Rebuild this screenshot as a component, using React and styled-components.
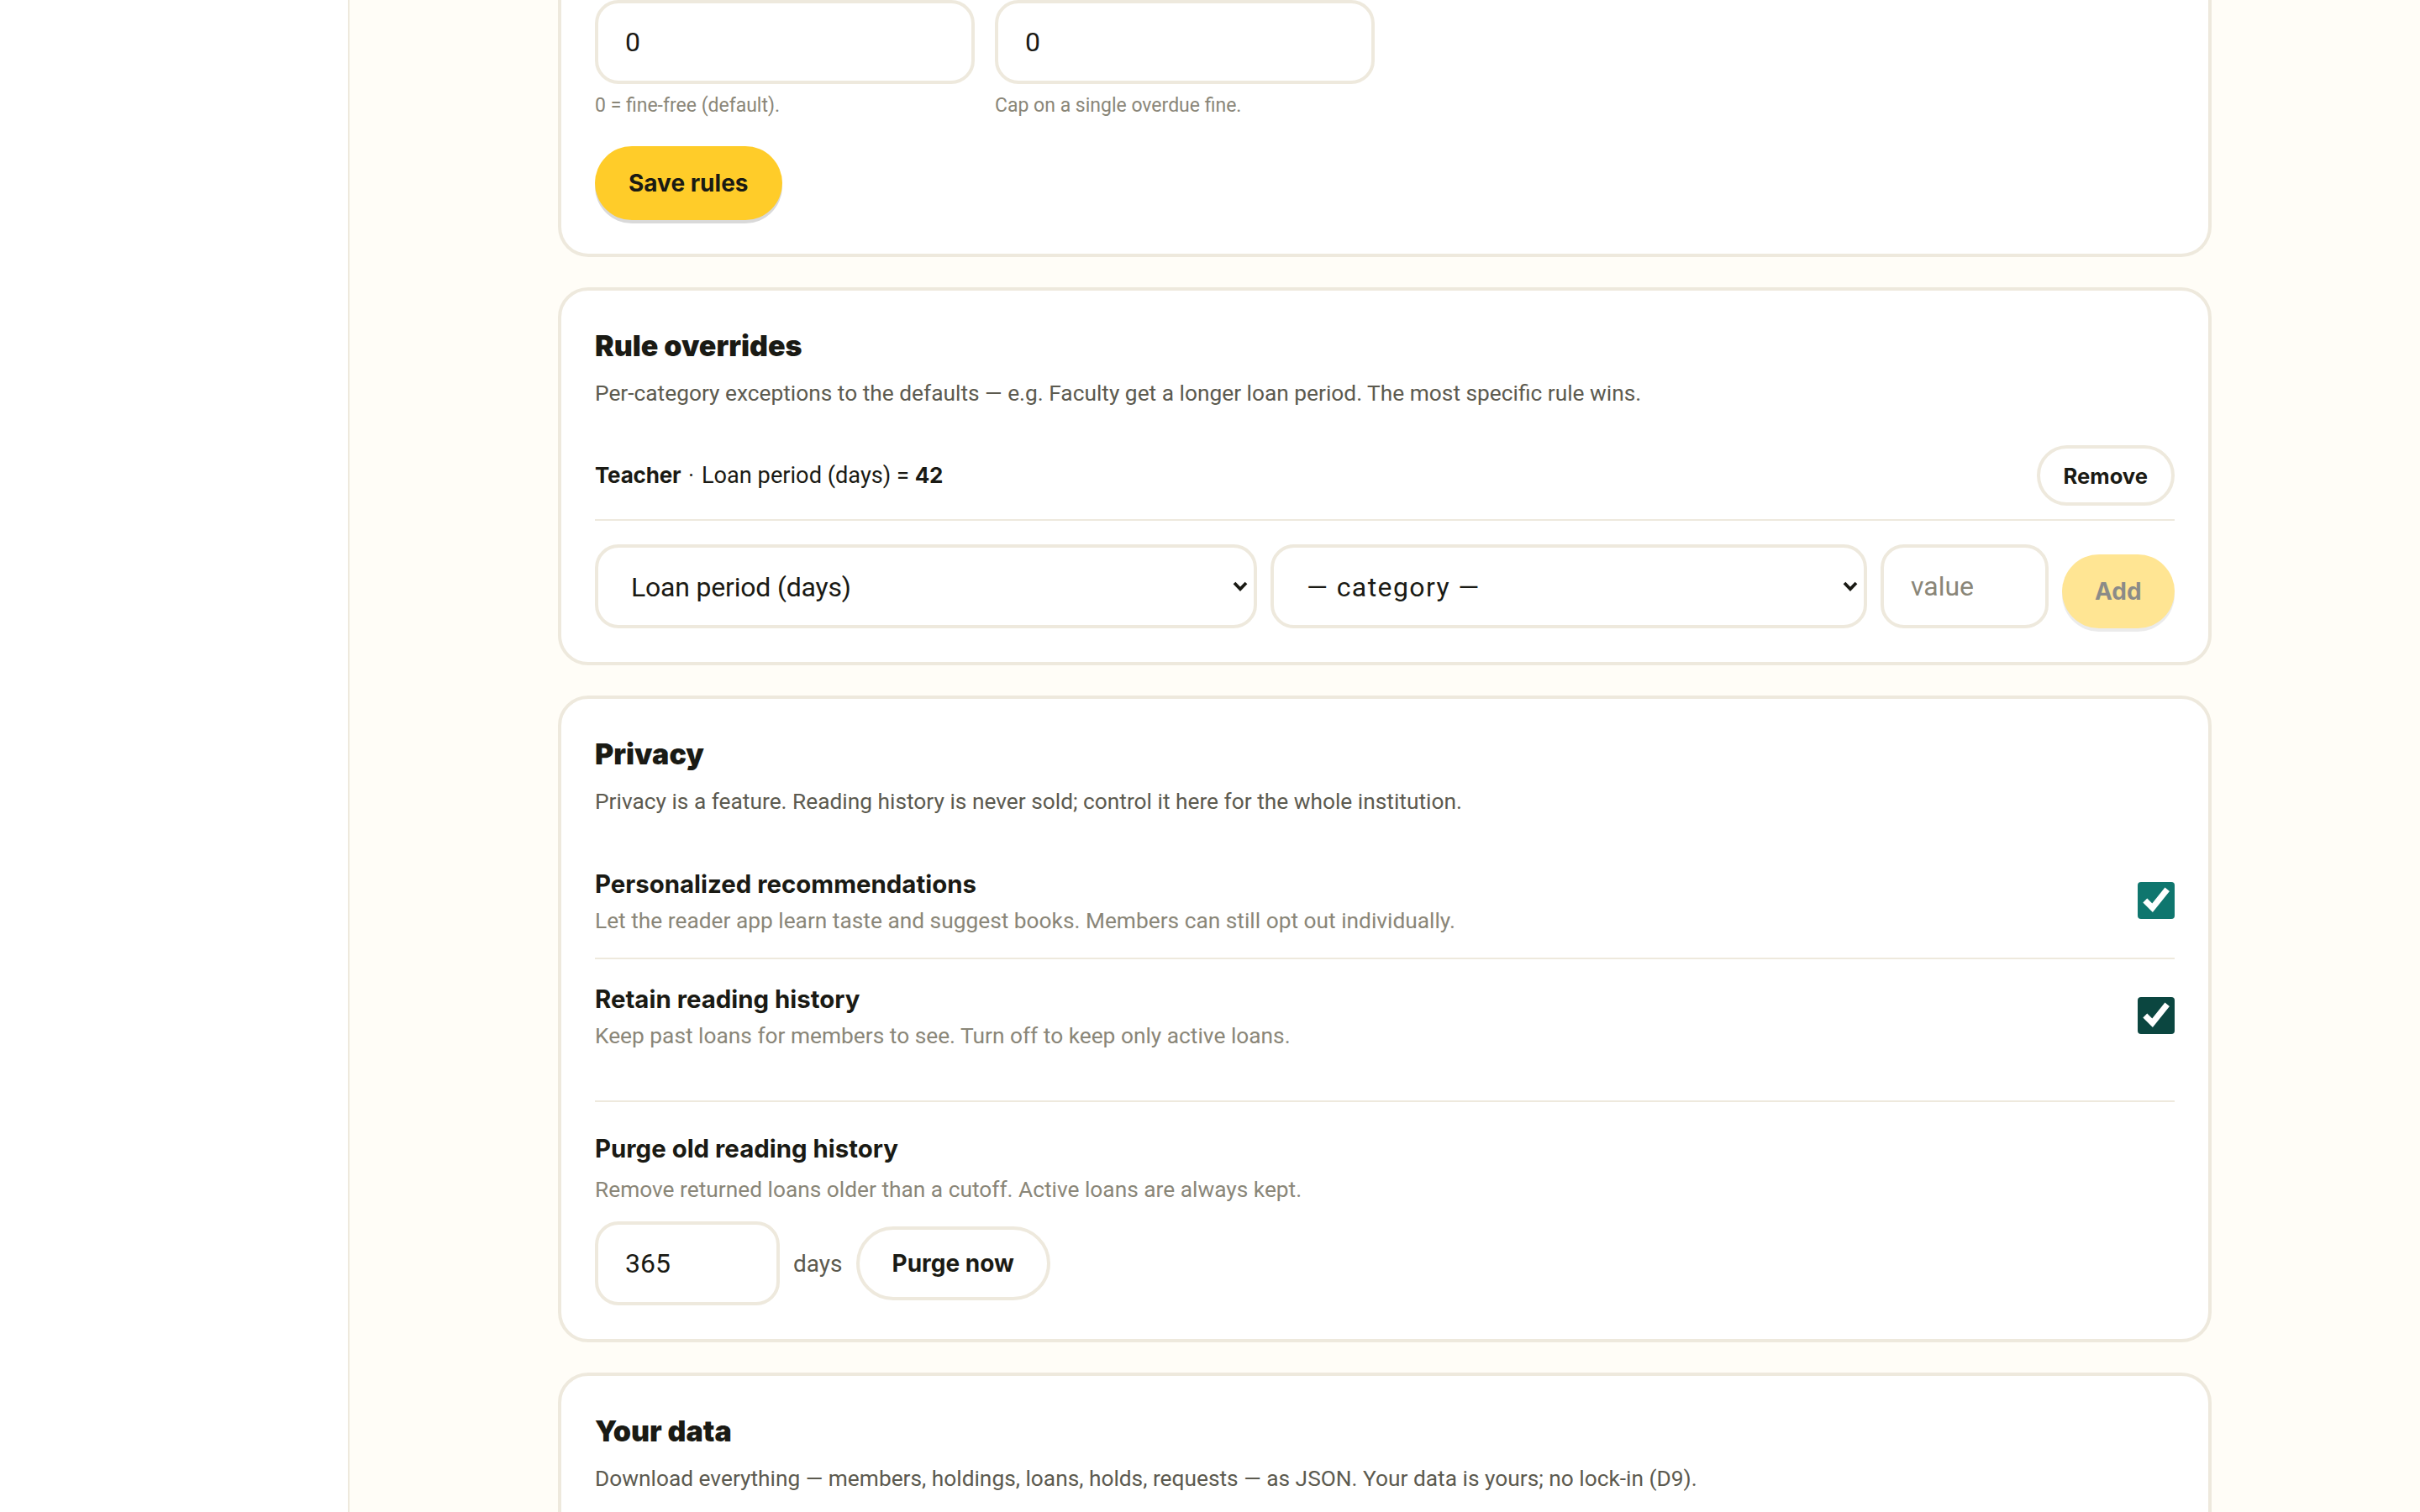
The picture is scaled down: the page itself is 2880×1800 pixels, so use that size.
import React from "react";
import styled, { createGlobalStyle } from "styled-components";

const GlobalStyle = createGlobalStyle`
  html, body {
    margin: 0;
    padding: 0;
    background: #fffdf7;
  }
  #root {
    zoom: 2;
  }
  * {
    box-sizing: border-box;
  }
`;

const bodyFont = `"Roboto", "Noto Sans", sans-serif`;
const headFont = `"Inter", "Roboto", sans-serif`;
const line = "#eee9dd";

const Shell = styled.div`
  display: flex;
  height: 900px;
  overflow: hidden;
  font-family: ${bodyFont};
  color: #1a1a14;
`;

const Sidebar = styled.aside`
  width: 208px;
  flex-shrink: 0;
  background: #fff;
  border-right: 1px solid ${line};
`;

const Main = styled.main`
  flex: 1 1 auto;
  background: #fffdf7;
  display: flex;
  flex-direction: column;
  align-items: center;
  gap: 18px;
`;

const Card = styled.section`
  width: 984px;
  flex-shrink: 0;
  background: #fff;
  border: 2px solid ${line};
  border-radius: 18px;
  padding: 20px;
`;

const TopCard = styled(Card)`
  border-top: 0;
  border-radius: 0 0 18px 18px;
  padding-top: 0;
`;

const TailCard = styled(Card)`
  min-height: 160px;
`;

const Title = styled.h2`
  margin: 0;
  font-family: ${headFont};
  font-size: 17px;
  line-height: 26px;
  font-weight: 900;
`;

const Lead = styled.p`
  margin: 4px 0 0;
  font-size: 13.15px;
  line-height: 22px;
  color: #5c5a4f;
`;

const Grid = styled.div`
  display: grid;
  grid-template-columns: repeat(4, 1fr);
  gap: 12px;
`;

const Input = styled.input`
  display: block;
  width: ${(p) => p.$width || "100%"};
  height: 50px;
  flex-shrink: 0;
  border: 2px solid ${line};
  border-radius: 14px;
  background: #fff;
  padding: 0 16px;
  font-family: ${bodyFont};
  font-size: 16px;
  color: #1a1a14;
  outline: none;
  &::placeholder {
    color: #8a8678;
  }
`;

const Hint = styled.div`
  margin-top: 5px;
  font-size: 11.5px;
  line-height: 16px;
  color: #8a8678;
`;

const PrimaryButton = styled.button`
  height: 44px;
  padding: 0 ${(p) => (p.disabled ? 19.5 : 20)}px;
  border: 0;
  border-radius: 22px;
  background: #ffcc29;
  box-shadow: 0 2px 0 rgba(0, 0, 0, 0.15);
  font-family: ${headFont};
  font-size: 14px;
  font-weight: 700;
  color: #1a1a14;
  opacity: ${(p) => (p.disabled ? 0.5 : 1)};
`;

const SaveRow = styled.div`
  margin-top: 16px;
`;

const GhostButton = styled.button`
  height: ${(p) => p.$height}px;
  padding: 0 ${(p) => p.$pad}px;
  border: 2px solid ${line};
  border-radius: 24px;
  background: #fff;
  font-family: ${headFont};
  font-size: ${(p) => p.$size}px;
  font-weight: 700;
  color: #1a1a14;
`;

const OverrideRow = styled.div`
  display: flex;
  align-items: center;
  justify-content: space-between;
  margin-top: 20px;
  padding-bottom: 8px;
  border-bottom: 1px solid ${line};
  font-size: 13.6px;
  strong {
    font-family: ${headFont};
    font-size: 13px;
    font-weight: 700;
    letter-spacing: -0.1px;
  }
`;

const Dot = styled.span`
  margin: 0 1px;
`;

const AddRow = styled.div`
  display: flex;
  align-items: flex-end;
  gap: 8px;
  margin-top: 14px;
`;

const SelectWrap = styled.div`
  position: relative;
  width: ${(p) => p.$width}px;
  flex-shrink: 0;
`;

const Select = styled.select`
  display: block;
  width: 100%;
  height: 50px;
  appearance: none;
  border: 2px solid ${line};
  border-radius: 14px;
  background: #fff;
  padding: 1px 24px 0 19.5px;
  font-family: ${bodyFont};
  font-size: 16px;
  letter-spacing: ${(p) => p.$track}px;
  color: #1a1a14;
  outline: none;
`;

const Chevron = styled.svg`
  position: absolute;
  right: 5.5px;
  top: 22px;
  width: 9px;
  height: 6.5px;
  pointer-events: none;
`;

const FirstSetting = styled.div`
  margin-top: 14px;
  display: flex;
  align-items: center;
  justify-content: space-between;
  padding: 14px 0 12px;
  border-bottom: 1px solid ${line};
`;

const Setting = styled.div`
  display: flex;
  align-items: center;
  justify-content: space-between;
  padding: 13.5px 0 12.5px;
`;

const SettingName = styled.div`
  font-family: ${headFont};
  font-size: 14.7px;
  line-height: 21px;
  font-weight: 700;
`;

const SettingHelp = styled.div`
  font-size: 13.15px;
  line-height: 20px;
  margin-top: ${(p) => p.$gap || 1}px;
  color: #8a8678;
`;

const Check = styled.input`
  width: 22px;
  height: 22px;
  margin: -2px 0 0;
  flex-shrink: 0;
  accent-color: ${(p) => p.$color};
`;

const PurgeBlock = styled.div`
  margin-top: 16px;
  padding-top: 17.5px;
  border-top: 1px solid ${line};
`;

const PurgeRow = styled.div`
  display: flex;
  align-items: center;
  gap: 8px;
  margin-top: 9px;
`;

const Unit = styled.span`
  font-size: 14px;
  color: #5c5a4f;
`;

const SelectBox = ({ width, label, track = -0.1 }) => (
  <SelectWrap $width={width}>
    <Select $track={track}>
      <option>{label}</option>
    </Select>
    <Chevron viewBox="0 0 9 6.5" fill="none" stroke="#1a1a14" strokeWidth="1.9">
      <path d="M1 1 L4.5 4.6 L8 1" />
    </Chevron>
  </SelectWrap>
);

export default function App() {
  return (
    <>
      <GlobalStyle />
      <Shell>
        <Sidebar />
        <Main>
          <TopCard>
            <Grid>
              <div>
                <Input defaultValue="0" />
                <Hint>0 = fine-free (default).</Hint>
              </div>
              <div>
                <Input defaultValue="0" />
                <Hint>Cap on a single overdue fine.</Hint>
              </div>
            </Grid>
            <SaveRow>
              <PrimaryButton>Save rules</PrimaryButton>
            </SaveRow>
          </TopCard>

          <Card>
            <Title>Rule overrides</Title>
            <Lead>
              Per-category exceptions to the defaults — e.g. Faculty get a longer loan
              period. The most specific rule wins.
            </Lead>
            <OverrideRow>
              <span>
                <strong>Teacher</strong>
                <Dot> · </Dot>Loan period (days) = <strong>42</strong>
              </span>
              <GhostButton $height={36} $pad={14} $size={12.8}>
                Remove
              </GhostButton>
            </OverrideRow>
            <AddRow>
              <SelectBox width={394} label="Loan period (days)" />
              <SelectBox width={355} label="— category —" track={0.7} />
              <Input $width="100px" placeholder="value" />
              <PrimaryButton disabled>Add</PrimaryButton>
            </AddRow>
          </Card>

          <Card>
            <Title>Privacy</Title>
            <Lead>
              Privacy is a feature. Reading history is never sold; control it here for the
              whole institution.
            </Lead>
            <FirstSetting>
              <div>
                <SettingName>Personalized recommendations</SettingName>
                <SettingHelp>
                  Let the reader app learn taste and suggest books. Members can still opt
                  out individually.
                </SettingHelp>
              </div>
              <Check type="checkbox" defaultChecked $color="#0f766e" />
            </FirstSetting>
            <Setting>
              <div>
                <SettingName>Retain reading history</SettingName>
                <SettingHelp>
                  Keep past loans for members to see. Turn off to keep only active loans.
                </SettingHelp>
              </div>
              <Check type="checkbox" defaultChecked $color="#0b4640" />
            </Setting>
            <PurgeBlock>
              <SettingName>Purge old reading history</SettingName>
              <SettingHelp $gap={3.5}>
                Remove returned loans older than a cutoff. Active loans are always kept.
              </SettingHelp>
              <PurgeRow>
                <Input $width="110px" defaultValue="365" />
                <Unit>days</Unit>
                <GhostButton $height={44} $pad={19.5} $size={14}>
                  Purge now
                </GhostButton>
              </PurgeRow>
            </PurgeBlock>
          </Card>

          <TailCard>
            <Title>Your data</Title>
            <Lead>
              Download everything — members, holdings, loans, holds, requests — as JSON.
              Your data is yours; no lock-in (D9).
            </Lead>
          </TailCard>
        </Main>
      </Shell>
    </>
  );
}
